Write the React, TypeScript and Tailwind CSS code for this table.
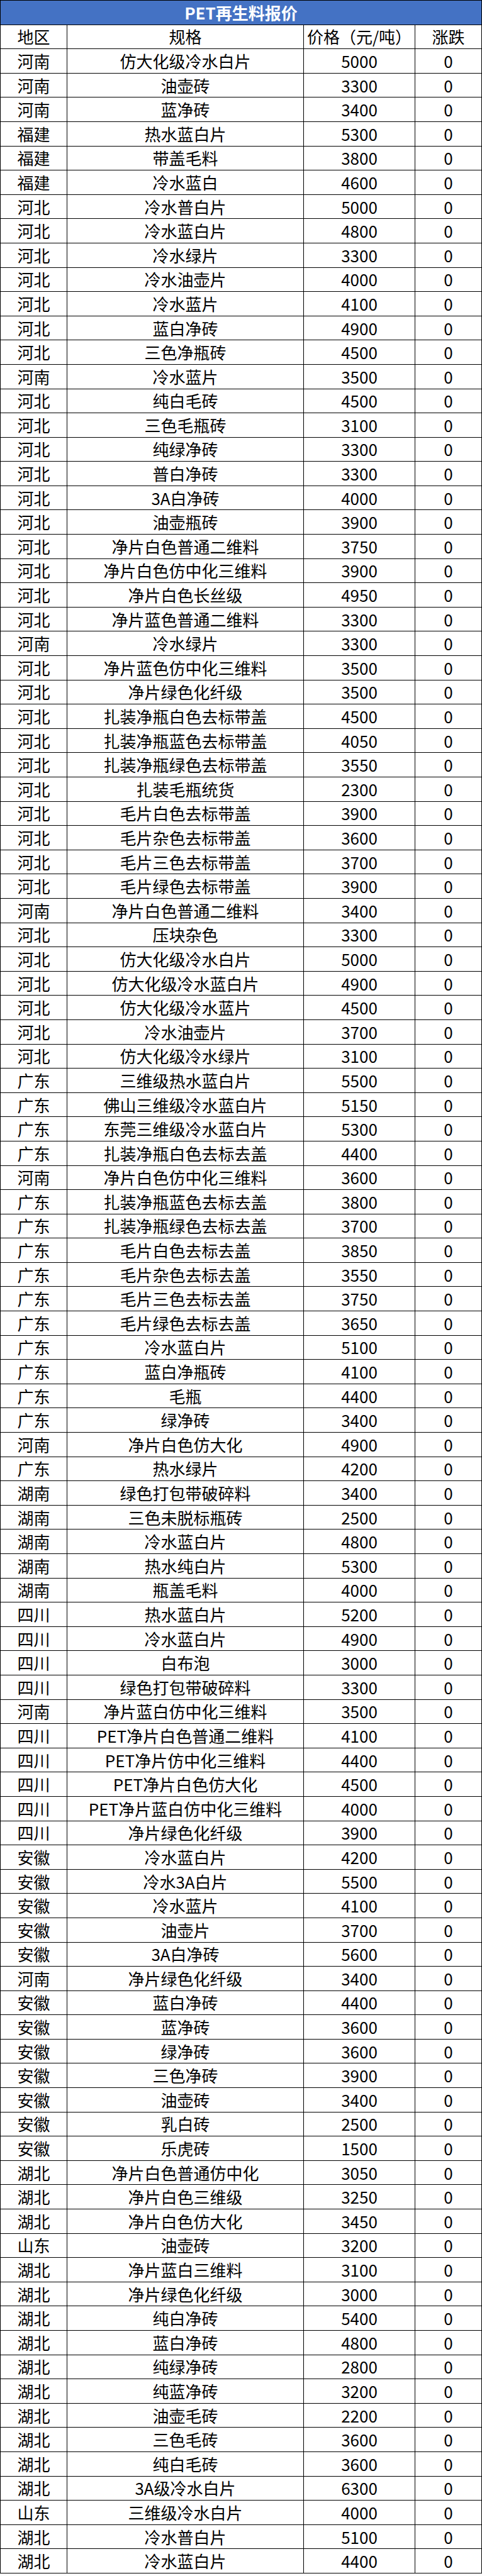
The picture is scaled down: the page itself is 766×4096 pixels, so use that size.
const raw = `河南|仿大化级冷水白片|5000
河南|油壶砖|3300
河南|蓝净砖|3400
福建|热水蓝白片|5300
福建|带盖毛料|3800
福建|冷水蓝白|4600
河北|冷水普白片|5000
河北|冷水蓝白片|4800
河北|冷水绿片|3300
河北|冷水油壶片|4000
河北|冷水蓝片|4100
河北|蓝白净砖|4900
河北|三色净瓶砖|4500
河南|冷水蓝片|3500
河北|纯白毛砖|4500
河北|三色毛瓶砖|3100
河北|纯绿净砖|3300
河北|普白净砖|3300
河北|3A白净砖|4000
河北|油壶瓶砖|3900
河北|净片白色普通二维料|3750
河北|净片白色仿中化三维料|3900
河北|净片白色长丝级|4950
河北|净片蓝色普通二维料|3300
河南|冷水绿片|3300
河北|净片蓝色仿中化三维料|3500
河北|净片绿色化纤级|3500
河北|扎装净瓶白色去标带盖|4500
河北|扎装净瓶蓝色去标带盖|4050
河北|扎装净瓶绿色去标带盖|3550
河北|扎装毛瓶统货|2300
河北|毛片白色去标带盖|3900
河北|毛片杂色去标带盖|3600
河北|毛片三色去标带盖|3700
河北|毛片绿色去标带盖|3900
河南|净片白色普通二维料|3400
河北|压块杂色|3300
河北|仿大化级冷水白片|5000
河北|仿大化级冷水蓝白片|4900
河北|仿大化级冷水蓝片|4500
河北|冷水油壶片|3700
河北|仿大化级冷水绿片|3100
广东|三维级热水蓝白片|5500
广东|佛山三维级冷水蓝白片|5150
广东|东莞三维级冷水蓝白片|5300
广东|扎装净瓶白色去标去盖|4400
河南|净片白色仿中化三维料|3600
广东|扎装净瓶蓝色去标去盖|3800
广东|扎装净瓶绿色去标去盖|3700
广东|毛片白色去标去盖|3850
广东|毛片杂色去标去盖|3550
广东|毛片三色去标去盖|3750
广东|毛片绿色去标去盖|3650
广东|冷水蓝白片|5100
广东|蓝白净瓶砖|4100
广东|毛瓶|4400
广东|绿净砖|3400
河南|净片白色仿大化|4900
广东|热水绿片|4200
湖南|绿色打包带破碎料|3400
湖南|三色未脱标瓶砖|2500
湖南|冷水蓝白片|4800
湖南|热水纯白片|5300
湖南|瓶盖毛料|4000
四川|热水蓝白片|5200
四川|冷水蓝白片|4900
四川|白布泡|3000
四川|绿色打包带破碎料|3300
河南|净片蓝白仿中化三维料|3500
四川|PET净片白色普通二维料|4100
四川|PET净片仿中化三维料|4400
四川|PET净片白色仿大化|4500
四川|PET净片蓝白仿中化三维料|4000
四川|净片绿色化纤级|3900
安徽|冷水蓝白片|4200
安徽|冷水3A白片|5500
安徽|冷水蓝片|4100
安徽|油壶片|3700
安徽|3A白净砖|5600
河南|净片绿色化纤级|3400
安徽|蓝白净砖|4400
安徽|蓝净砖|3600
安徽|绿净砖|3600
安徽|三色净砖|3900
安徽|油壶砖|3400
安徽|乳白砖|2500
安徽|乐虎砖|1500
湖北|净片白色普通仿中化|3050
湖北|净片白色三维级|3250
湖北|净片白色仿大化|3450
山东|油壶砖|3200
湖北|净片蓝白三维料|3100
湖北|净片绿色化纤级|3000
湖北|纯白净砖|5400
湖北|蓝白净砖|4800
湖北|纯绿净砖|2800
湖北|纯蓝净砖|3200
湖北|油壶毛砖|2200
湖北|三色毛砖|3600
湖北|纯白毛砖|3600
湖北|3A级冷水白片|6300
山东|三维级冷水白片|4000
湖北|冷水普白片|5100
湖北|冷水蓝白片|4400`;

type PriceRow = { region: string; spec: string; price: string; change: string };

const rows: PriceRow[] = raw.split("\n").map((line) => {
	const [region, spec, price] = line.split("|");
	return { region, spec, price, change: "0" };
});

const cell = "border border-black p-0 h-[38.6px] text-center whitespace-nowrap leading-none";

export default function App() {
	return (
		<div className="w-[766px] bg-white text-black font-['Noto_Sans_CJK_SC','Noto_Sans',sans-serif] text-[26px]">
			<table className="w-full table-fixed border-collapse">
				<colgroup>
					<col className="w-[106px]" />
					<col className="w-[376px]" />
					<col className="w-[177px]" />
					<col />
				</colgroup>
				<thead>
					<tr>
						<th
							colSpan={4}
							className={`${cell} bg-[#4472c4] text-white font-bold`}
						>
							PET再生料报价
						</th>
					</tr>
					<tr>
						<th className={`${cell} font-normal`}>地区</th>
						<th className={`${cell} font-normal`}>规格</th>
						<th className={`${cell} font-normal`}>价格（元/吨）</th>
						<th className={`${cell} font-normal`}>涨跌</th>
					</tr>
				</thead>
				<tbody>
					{rows.map((r, i) => (
						<tr key={i}>
							<td className={cell}>{r.region}</td>
							<td className={cell}>{r.spec}</td>
							<td className={cell}>{r.price}</td>
							<td className={cell}>{r.change}</td>
						</tr>
					))}
				</tbody>
			</table>
		</div>
	);
}
